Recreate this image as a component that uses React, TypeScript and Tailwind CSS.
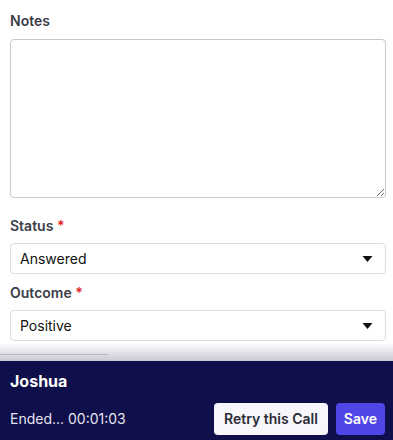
import React from "react";

function Caret() {
  return (
    <svg width="11" height="7" viewBox="0 0 11 7" className="pointer-events-none absolute right-[13px] top-1/2 -translate-y-1/2">
      <path d="M0.5 0.5h10L5.5 6.5z" fill="#111111" />
    </svg>
  );
}

function SelectField({ label, value }: { label: string; value: string }) {
  return (
    <div className="flex flex-col">
      <label className="text-sm font-semibold leading-5 text-[#3b3d48]">
        {label} <span className="text-[#dc2626]">*</span>
      </label>
      <div className="relative mt-[7px]">
        <div className="h-[31px] rounded-[4px] border border-[#dcdde1] bg-white pl-[9px] text-sm leading-[29px] text-[#111111]">
          {value}
        </div>
        <Caret />
      </div>
    </div>
  );
}

export default function App() {
  return (
    <div className="flex h-[440px] w-[393px] flex-col overflow-hidden bg-white font-['Inter',sans-serif]">
      <div className="flex flex-col pl-[10px] pr-[7px] pt-[11px]">
        <label className="text-sm font-semibold leading-5 text-[#3b3d48]">Notes</label>
        <textarea className="mt-2 h-[159px] w-full rounded-[4px] border border-[#c9c9cc] bg-white p-2 text-sm outline-none" />
        <div className="mt-[18px] flex flex-col gap-[9px]">
          <SelectField label="Status" value="Answered" />
          <SelectField label="Outcome" value="Positive" />
        </div>
      </div>
      <div className="relative mt-[3px] h-[17px] bg-gradient-to-b from-[#fbfbfd] to-[#c9c9d3]">
        <div className="absolute left-0 top-[10px] h-px w-[108px] bg-[#b5b5bf]" />
      </div>
      <div className="flex flex-1 flex-col bg-[#0f0f4b] pl-[10px] pr-[8px] pt-[8px] text-white">
        <div className="text-base font-bold leading-6">Joshua</div>
        <div className="mt-[10px] flex items-center justify-between">
          <span className="text-sm text-[#e4e4ee]">Ended... 00:01:03</span>
          <div className="flex gap-2">
            <button className="h-8 rounded-[4px] bg-[#f6f6fb] px-[10px] text-sm font-semibold text-[#2b2b35]">
              Retry this Call
            </button>
            <button className="h-8 rounded-[4px] bg-[#4f46e5] px-[8px] text-sm font-semibold text-white">
              Save
            </button>
          </div>
        </div>
      </div>
    </div>
  );
}
